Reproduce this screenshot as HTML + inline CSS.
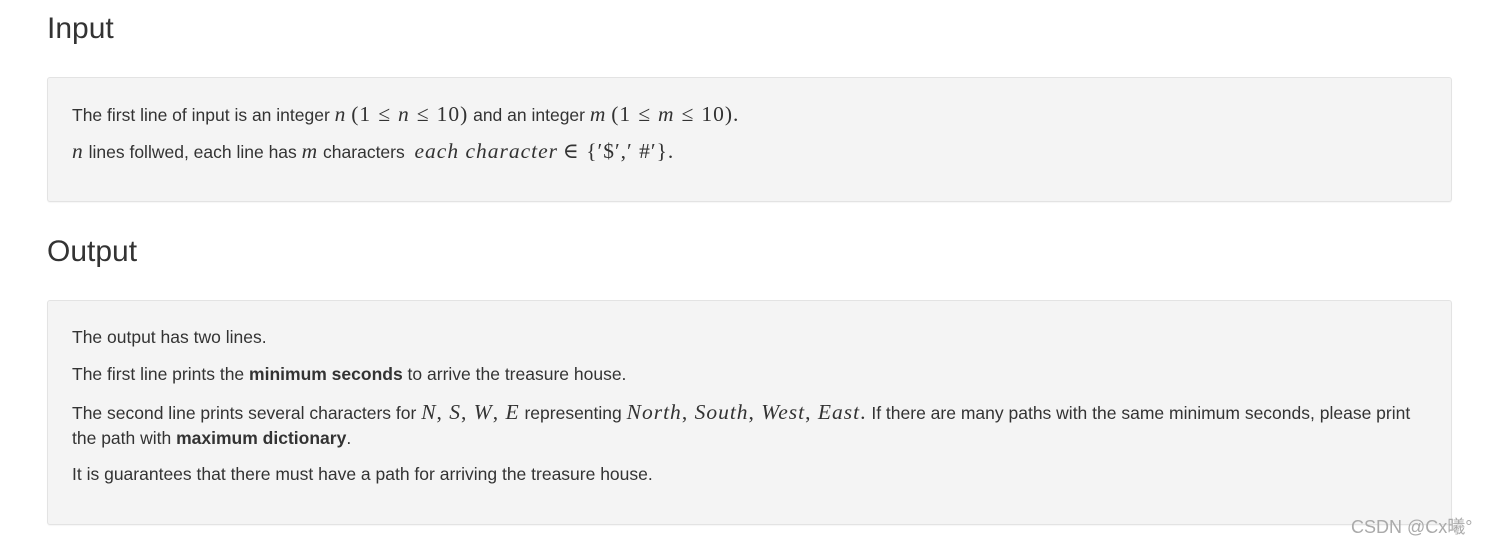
<!DOCTYPE html>
<html><head><meta charset="utf-8"><style>
body{margin:0;background:#fff;width:1489px;height:542px;overflow:hidden;position:relative;font-family:"Liberation Sans",Arial,sans-serif;color:#333;}
h2{position:absolute;left:47px;margin:0;font-weight:400;font-size:30px;line-height:32px;color:#333}
.box{position:absolute;left:47px;width:1403px;background:#f4f4f4;border:1px solid #e3e3e3;border-radius:3px;box-shadow:0 1px 1px rgba(0,0,0,.04)}
.l{position:absolute;left:72px;font-size:17.5px;line-height:20px;white-space:nowrap}
.m{font-family:"Liberation Serif","DejaVu Serif",serif;font-size:21.5px;font-style:italic;letter-spacing:1px}
.r{font-family:"Liberation Serif","DejaVu Serif",serif;font-size:21.5px;letter-spacing:1px}
.s{display:inline-block;margin:0 7px}
.wm{position:absolute;left:1351px;top:513px;font-size:18px;color:#aaa;font-family:"Liberation Sans","Noto Sans CJK SC",sans-serif}
</style></head><body>
<h2 style="top:13px">Input</h2>
<div class="box" style="top:77px;height:123px"></div>
<div class="l" style="top:104px">The first line of input is an integer <span class="m">n</span> <span class="r">(1<span class="s">≤</span><i>n</i><span class="s">≤</span>10)</span> and an integer <span class="m">m</span> <span class="r">(1<span class="s">≤</span><i>m</i><span class="s">≤</span>10).</span></div>
<div class="l" style="top:141px"><span class="m">n</span> lines follwed, each line has <span class="m">m</span> characters &nbsp;<span class="m">each character</span> <span class="r">∈ {′$′,′ #′}.</span></div>
<h2 style="top:236px">Output</h2>
<div class="box" style="top:300px;height:223px"></div>
<div class="l" style="top:327px">The output has two lines.</div>
<div class="l" style="top:364px">The first line prints the <b>minimum seconds</b> to arrive the treasure house.</div>
<div class="l" style="top:402px">The second line prints several characters for <span class="m">N</span><span class="r">, </span><span class="m">S</span><span class="r">, </span><span class="m">W</span><span class="r">, </span><span class="m">E</span> representing <span class="m">North</span><span class="r">, </span><span class="m">South</span><span class="r">, </span><span class="m">West</span><span class="r">, </span><span class="m">East</span><span class="r">.</span> If there are many paths with the same minimum seconds, please print</div>
<div class="l" style="top:428px">the path with <b>maximum dictionary</b>.</div>
<div class="l" style="top:464px">It is guarantees that there must have a path for arriving the treasure house.</div>
<div class="wm">CSDN @Cx曦°</div>
</body></html>
